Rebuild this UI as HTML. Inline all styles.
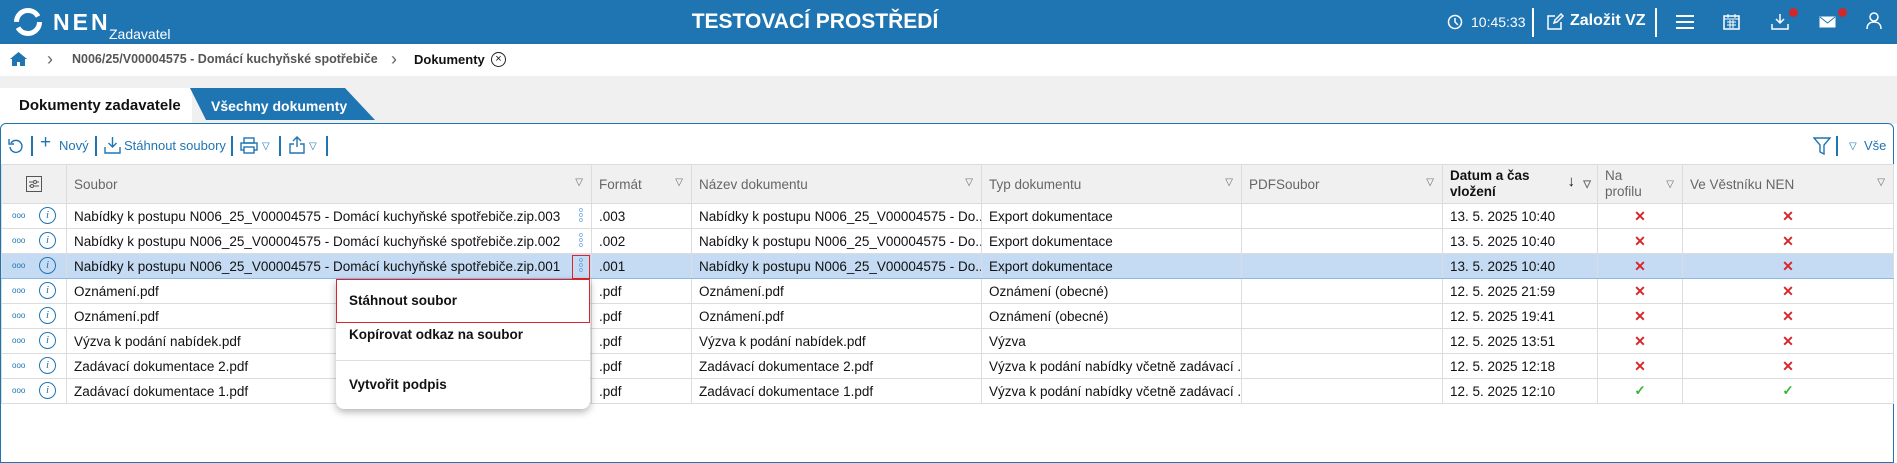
<!DOCTYPE html>
<html><head><meta charset="utf-8"><style>
*{box-sizing:border-box;margin:0;padding:0}
body{width:1897px;height:450px;overflow:hidden;background:#fff;font-family:"Liberation Sans",Arial,sans-serif;position:relative;color:#111}
.a{position:absolute}
#top{left:0;top:0;width:1897px;height:44px;background:#1f75b2;color:#fff}
#bc{left:0;top:44px;width:1897px;height:32px;background:#fff;box-shadow:0 2px 4px rgba(0,0,0,.15)}
#gray{left:0;top:76px;width:1897px;height:48px;background:#f0f0f0}
#panel{left:0;top:123px;width:1894px;height:340px;border:1.5px solid #1f75b2;border-radius:6px 6px 0 0;background:#fff}
.tb{color:#1f75b2;font-size:13px;top:138px}
.sep{width:1.5px;height:20px;background:#1f75b2;top:136px}
table{position:absolute;left:1px;top:164px;width:1892px;border-collapse:collapse;table-layout:fixed;font-size:13.5px}
td,th{height:25px;border:1px solid #dcdcdc;padding:0 7px;white-space:nowrap;overflow:hidden;text-align:left;font-weight:normal}
th{height:39px;background:#f0f0f0;color:#666;vertical-align:middle;position:relative}
th .f{position:absolute;right:8px;top:12px;font-size:10px;color:#666}
tr.sel td{background:#c4dbf3;border-bottom:1px solid #8fb8e6}
.x{color:#d8262b;font-weight:bold;text-align:center;font-size:14px}
.ok{color:#3bb33b;text-align:center;font-weight:bold}
.dots{font-size:8px;color:#1f75b2;position:absolute;left:12px}
.info{position:absolute;left:39px;width:17px;height:17px;border:1.5px solid #1f75b2;border-radius:50%;color:#1f75b2;font-size:11px;text-align:center;line-height:14px;font-family:"Liberation Serif",serif;font-style:italic}
.kb{position:absolute;left:576px;width:10px;color:#4a90d9;font-size:7px;line-height:5px;text-align:center}
#menu{left:336px;top:279px;width:254px;height:130px;background:#fff;border-radius:0 0 8px 8px;box-shadow:0 3px 8px rgba(0,0,0,.3);font-weight:bold;font-size:13.5px}
</style></head><body>
<div id="top" class="a">
 <svg class="a" style="left:13px;top:7px" width="30" height="30" viewBox="0 0 30 30"><circle cx="15" cy="15" r="11.5" fill="none" stroke="#fff" stroke-width="5" stroke-dasharray="30 6"/></svg>
 <div class="a" style="left:53px;top:9px;font-size:23px;font-weight:bold;letter-spacing:3px">NEN</div>
 <div class="a" style="left:109px;top:26px;font-size:14px">Zadavatel</div>
 <div class="a" style="left:0;width:1630px;text-align:center;top:10px;font-size:21px;font-weight:bold">TESTOVACÍ PROSTŘEDÍ</div>
 <svg class="a" style="left:1447px;top:14px" width="16" height="16"><circle cx="8" cy="8" r="6.5" fill="none" stroke="#fff" stroke-width="1.5"/><path d="M8 4v4l3 3" stroke="#fff" stroke-width="1.5" fill="none"/></svg>
 <div class="a" style="left:1471px;top:14px;font-size:14px">10:45:33</div>
 <div class="a" style="left:1532px;top:8px;width:2px;height:29px;background:#fff"></div>
 <svg class="a" style="left:1546px;top:13px" width="18" height="18"><path d="M9 3H2v13h13V9M8 10l1-3 6-6 2 2-6 6z" stroke="#fff" stroke-width="1.5" fill="none"/></svg>
 <div class="a" style="left:1570px;top:12px;font-size:16px;font-weight:bold">Založit VZ</div>
 <div class="a" style="left:1655px;top:8px;width:2px;height:29px;background:#fff"></div>
 <svg class="a" style="left:1676px;top:15px" width="18" height="14"><path d="M0 1h18M0 7h18M0 13h18" stroke="#fff" stroke-width="2"/></svg>
 <svg class="a" style="left:1723px;top:13px" width="17" height="17"><rect x="1" y="3" width="15" height="13" fill="none" stroke="#fff" stroke-width="1.5"/><path d="M1 6h15M5 1v4M12 1v4M4 9h9M4 12h9M7 7v8M10 7v8" stroke="#fff"/></svg>
 <svg class="a" style="left:1771px;top:14px" width="18" height="16"><path d="M9 0v9M5 5l4 4 4-4M1 10v5h16v-5" stroke="#fff" stroke-width="1.5" fill="none"/></svg>
 <div class="a" style="left:1789px;top:8px;width:9px;height:9px;border-radius:50%;background:#cf2a2a"></div>
 <svg class="a" style="left:1819px;top:16px" width="17" height="12"><rect x=".5" y=".5" width="16" height="11" fill="#fff"/><path d="M1 1l7.5 6L16 1" stroke="#1f75b2" fill="none"/></svg>
 <div class="a" style="left:1838px;top:8px;width:9px;height:9px;border-radius:50%;background:#cf2a2a"></div>
 <svg class="a" style="left:1866px;top:12px" width="16" height="18"><circle cx="8" cy="5" r="4" fill="none" stroke="#fff" stroke-width="1.5"/><path d="M1 17c0-5 3-7 7-7s7 2 7 7" fill="none" stroke="#fff" stroke-width="1.5"/></svg>
</div>
<div id="bc" class="a">
 <svg class="a" style="left:10px;top:7px" width="17" height="16"><path d="M8.5 1L0 8h2v7h5v-4h3v4h5V8h2z" fill="#1f75b2"/></svg>
 <div class="a" style="left:47px;top:5px;color:#666;font-size:18px">&#x203A;</div>
 <div class="a" style="left:72px;top:8px;color:#555;font-size:12.5px;font-weight:bold">N006/25/V00004575 - Domácí kuchyňské spotřebiče</div>
 <div class="a" style="left:391px;top:5px;color:#666;font-size:18px">&#x203A;</div>
 <div class="a" style="left:414px;top:8px;font-size:13px;font-weight:bold">Dokumenty</div>
 <div class="a" style="left:491px;top:8px;width:15px;height:15px;border:1.5px solid #222;border-radius:50%;font-size:11px;text-align:center;line-height:12px">×</div>
</div>
<div id="gray" class="a"></div>
<div class="a" style="left:0;top:88px;width:192px;height:36px;background:#fff;font-weight:bold;font-size:15px;padding:9px 0 0 19px">Dokumenty zadavatele</div>
<svg class="a" style="left:190px;top:88px" width="190" height="32"><path d="M0 0h155l30 32H16z" fill="#1f75b2"/></svg>
<div class="a" style="left:211px;top:98px;color:#fff;font-weight:bold;font-size:14px">Všechny dokumenty</div>
<div id="panel" class="a"></div>
<svg class="a" style="left:8px;top:138px" width="16" height="16"><path d="M3 5a6 6 0 1 1-1 4" fill="none" stroke="#1f75b2" stroke-width="1.4"/><path d="M1 1v5h5" fill="none" stroke="#1f75b2" stroke-width="1.4"/></svg>
<div class="a sep" style="left:31px"></div>
<div class="a tb" style="left:40px;font-size:19px;top:132px">+</div><div class="a tb" style="left:59px">Nový</div>
<div class="a sep" style="left:95px"></div>
<svg class="a" style="left:104px;top:137px" width="17" height="17"><path d="M8.5 0v10M4.5 6l4 4 4-4M1 10v6h15v-6" stroke="#1f75b2" stroke-width="1.4" fill="none"/></svg>
<div class="a tb" style="left:124px">Stáhnout soubory</div>
<div class="a sep" style="left:231px"></div>
<svg class="a" style="left:240px;top:137px" width="18" height="17"><rect x="4" y="1" width="10" height="5" fill="none" stroke="#1f75b2" stroke-width="1.4"/><rect x="1" y="6" width="16" height="7" fill="none" stroke="#1f75b2" stroke-width="1.4"/><rect x="4" y="10" width="10" height="6" fill="#fff" stroke="#1f75b2" stroke-width="1.4"/></svg>
<div class="a tb" style="left:262px;font-size:10px;top:141px">▽</div>
<div class="a sep" style="left:279px"></div>
<svg class="a" style="left:289px;top:136px" width="16" height="18"><path d="M8 1v10M4 5l4-4 4 4M5 8H1v9h14V8h-4" stroke="#1f75b2" stroke-width="1.4" fill="none"/></svg>
<div class="a tb" style="left:309px;font-size:10px;top:141px">▽</div>
<div class="a sep" style="left:326px"></div>
<svg class="a" style="left:1813px;top:137px" width="18" height="18"><path d="M1 1h16l-6 7v9l-4-2V8z" fill="none" stroke="#1f75b2" stroke-width="1.4"/></svg>
<div class="a sep" style="left:1836px"></div>
<div class="a tb" style="left:1849px;font-size:10px;top:141px">▽</div>
<div class="a tb" style="left:1864px">Vše</div>
<table>
<colgroup><col style="width:65px"><col style="width:525px"><col style="width:100px"><col style="width:290px"><col style="width:260px"><col style="width:201px"><col style="width:155px"><col style="width:85px"><col style="width:211px"></colgroup>
<tr><th style="text-align:center"><svg width="16" height="16" style="vertical-align:middle"><rect x=".5" y=".5" width="15" height="15" fill="none" stroke="#555"/><path d="M3 6h10M3 10h10" stroke="#555"/><circle cx="9" cy="6" r="1.5" fill="#fff" stroke="#555"/><circle cx="6" cy="10" r="1.5" fill="#fff" stroke="#555"/></svg></th>
<th>Soubor<span class="f">▽</span></th><th>Formát<span class="f">▽</span></th><th>Název dokumentu<span class="f">▽</span></th><th>Typ dokumentu<span class="f">▽</span></th><th>PDFSoubor<span class="f">▽</span></th>
<th style="color:#111;font-weight:bold;line-height:16px">Datum a čas<br>vložení<span class="f" style="color:#111;font-size:15px;top:9px;right:22px;font-weight:normal">↓</span><span class="f" style="right:6px">▽</span></th>
<th style="line-height:16px">Na<br>profilu<span class="f">▽</span></th><th>Ve Věstníku NEN<span class="f">▽</span></th></tr>
<tr><td></td><td>Nabídky k postupu N006_25_V00004575 - Domácí kuchyňské spotřebiče.zip.003</td><td>.003</td><td>Nabídky k postupu N006_25_V00004575 - Do...</td><td>Export dokumentace</td><td></td><td>13. 5. 2025 10:40</td><td class="x">✕</td><td class="x">✕</td></tr>
<tr><td></td><td>Nabídky k postupu N006_25_V00004575 - Domácí kuchyňské spotřebiče.zip.002</td><td>.002</td><td>Nabídky k postupu N006_25_V00004575 - Do...</td><td>Export dokumentace</td><td></td><td>13. 5. 2025 10:40</td><td class="x">✕</td><td class="x">✕</td></tr>
<tr class="sel"><td></td><td>Nabídky k postupu N006_25_V00004575 - Domácí kuchyňské spotřebiče.zip.001</td><td>.001</td><td>Nabídky k postupu N006_25_V00004575 - Do...</td><td>Export dokumentace</td><td></td><td>13. 5. 2025 10:40</td><td class="x">✕</td><td class="x">✕</td></tr>
<tr><td></td><td>Oznámení.pdf</td><td>.pdf</td><td>Oznámení.pdf</td><td>Oznámení (obecné)</td><td></td><td>12. 5. 2025 21:59</td><td class="x">✕</td><td class="x">✕</td></tr>
<tr><td></td><td>Oznámení.pdf</td><td>.pdf</td><td>Oznámení.pdf</td><td>Oznámení (obecné)</td><td></td><td>12. 5. 2025 19:41</td><td class="x">✕</td><td class="x">✕</td></tr>
<tr><td></td><td>Výzva k podání nabídek.pdf</td><td>.pdf</td><td>Výzva k podání nabídek.pdf</td><td>Výzva</td><td></td><td>12. 5. 2025 13:51</td><td class="x">✕</td><td class="x">✕</td></tr>
<tr><td></td><td>Zadávací dokumentace 2.pdf</td><td>.pdf</td><td>Zadávací dokumentace 2.pdf</td><td>Výzva k podání nabídky včetně zadávací ...</td><td></td><td>12. 5. 2025 12:18</td><td class="x">✕</td><td class="x">✕</td></tr>
<tr><td></td><td>Zadávací dokumentace 1.pdf</td><td>.pdf</td><td>Zadávací dokumentace 1.pdf</td><td>Výzva k podání nabídky včetně zadávací ...</td><td></td><td>12. 5. 2025 12:10</td><td class="ok">✓</td><td class="ok">✓</td></tr>
</table>
<div class="a dots" style="top:211px">ooo</div><div class="a info" style="top:207px">i</div>
<div class="a dots" style="top:236px">ooo</div><div class="a info" style="top:232px">i</div>
<div class="a dots" style="top:261px">ooo</div><div class="a info" style="top:257px">i</div>
<div class="a dots" style="top:286px">ooo</div><div class="a info" style="top:282px">i</div>
<div class="a dots" style="top:311px">ooo</div><div class="a info" style="top:307px">i</div>
<div class="a dots" style="top:336px">ooo</div><div class="a info" style="top:332px">i</div>
<div class="a dots" style="top:361px">ooo</div><div class="a info" style="top:357px">i</div>
<div class="a dots" style="top:386px">ooo</div><div class="a info" style="top:382px">i</div>
<div class="a kb" style="top:208px">o<br>o<br>o</div>
<div class="a kb" style="top:233px">o<br>o<br>o</div>
<div class="a" style="left:572px;top:255px;width:18px;height:24px;border:1.5px solid #d8262b"></div>
<div class="a kb" style="top:258px">o<br>o<br>o</div>
<div id="menu" class="a">
 <div class="a" style="left:0;top:0;width:254px;height:44px;border:1.5px solid #d8262b"></div>
 <div class="a" style="left:13px;top:14px">Stáhnout soubor</div>
 <div class="a" style="left:13px;top:48px">Kopírovat odkaz na soubor</div>
 <div class="a" style="left:0;top:81px;width:254px;height:1px;background:#ddd"></div>
 <div class="a" style="left:13px;top:98px">Vytvořit podpis</div>
</div>
</body></html>
